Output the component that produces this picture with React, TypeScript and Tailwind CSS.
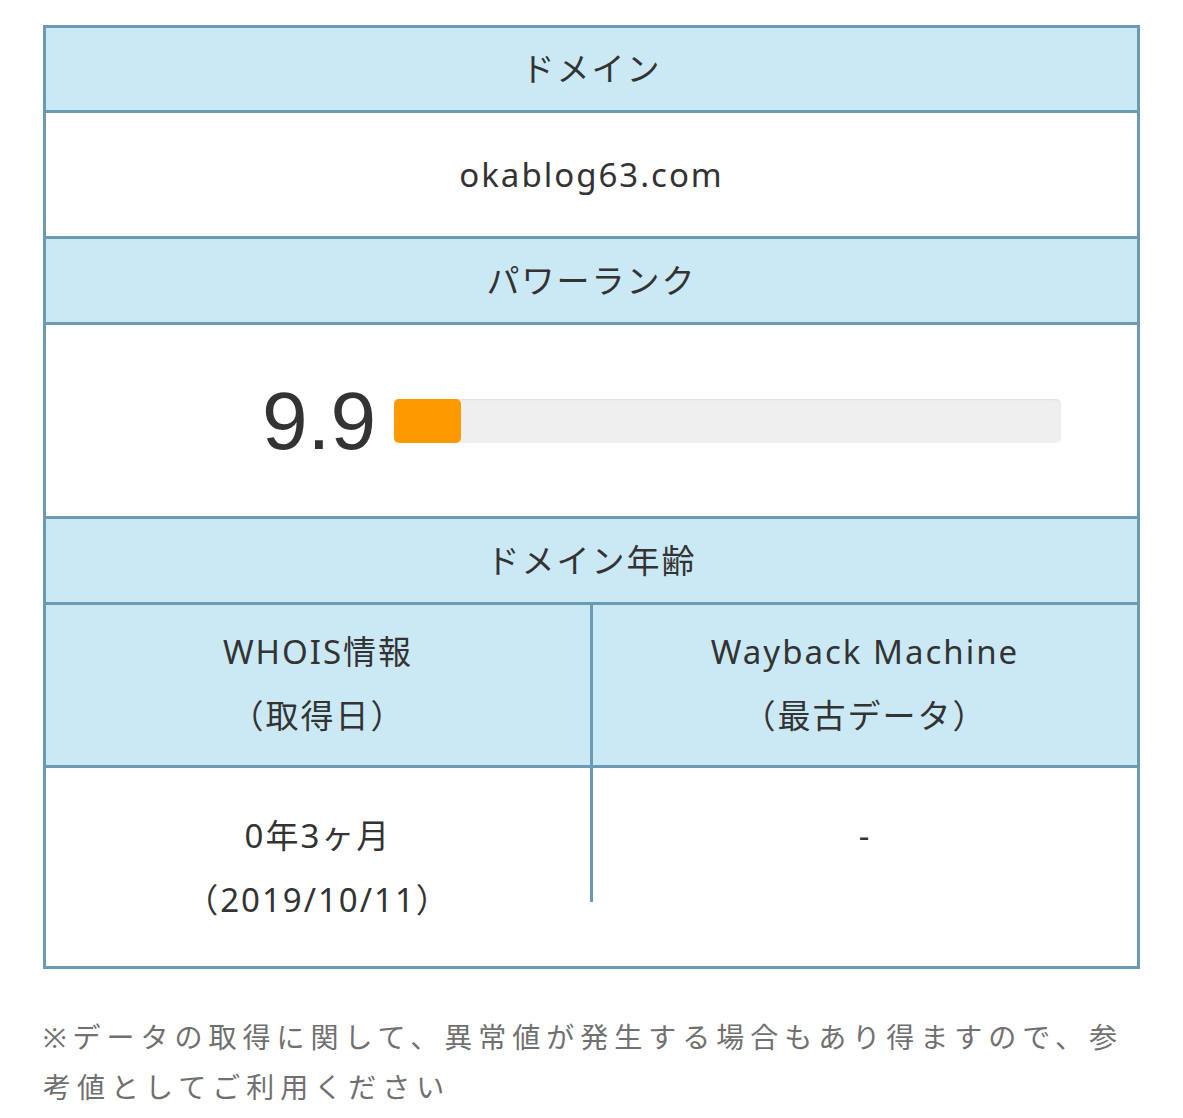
import React from 'react';

const border = 'border-[#6a9bb2]';
const head = 'bg-[#cbe9f5]';

export default function App() {
  const rank = 9.9;

  return (
    <div className="h-[1118px] overflow-hidden bg-white px-[43px] pt-[25px] text-[#333] font-['Noto_Sans','Noto_Sans_CJK_JP',sans-serif]">
      <div className={`border-[3px] ${border} text-[33px] tracking-[2px]`}>
        {/* domain */}
        <div className={`h-[82px] flex items-center justify-center ${head}`}>ドメイン</div>
        <div className={`h-[126px] border-t-[3px] ${border} flex items-center justify-center`}>
          okablog63.com
        </div>

        {/* power rank */}
        <div className={`h-[86px] border-t-[3px] ${border} ${head} flex items-center justify-center`}>
          パワーランク
        </div>
        <div className={`h-[194px] border-t-[3px] ${border} flex items-center pl-[216px] gap-[18px]`}>
          <span className="font-['Liberation_Sans',sans-serif] text-[82px] leading-none tracking-normal">
            {rank.toFixed(1)}
          </span>
          <div className="w-[667px] h-[44px] rounded-[5px] bg-[#efefef] shadow-[inset_0_1px_2px_rgba(0,0,0,0.06)]">
            <div className="h-full rounded-[5px] bg-[#ff9900]" style={{ width: `${rank * (100 / 99)}%` }} />
          </div>
        </div>

        {/* domain age */}
        <div className={`h-[86px] border-t-[3px] ${border} ${head} flex items-center justify-center`}>
          ドメイン年齢
        </div>
        <div className={`h-[163px] border-t-[3px] ${border} ${head} flex leading-[64px] text-center`}>
          <div className={`flex-1 border-r-[3px] ${border} pt-[15px]`}>
            <div>WHOIS情報</div>
            <div>（取得日）</div>
          </div>
          <div className="flex-1 pt-[15px]">
            <div>Wayback Machine</div>
            <div>（最古データ）</div>
          </div>
        </div>
        <div className={`h-[201px] border-t-[3px] ${border} flex items-start leading-[64px] text-center`}>
          <div className={`flex-1 h-[134px] border-r-[3px] ${border} pt-[36px]`}>
            <div>0年3ヶ月</div>
            <div>（2019/10/11）</div>
          </div>
          <div className="flex-1 pt-[36px]">-</div>
        </div>
      </div>

      <p className="mt-[43px] text-[28px] leading-[50px] tracking-[6px] text-[#707070]">
        ※データの取得に関して、異常値が発生する場合もあり得ますので、参考値としてご利用ください
      </p>
    </div>
  );
}
